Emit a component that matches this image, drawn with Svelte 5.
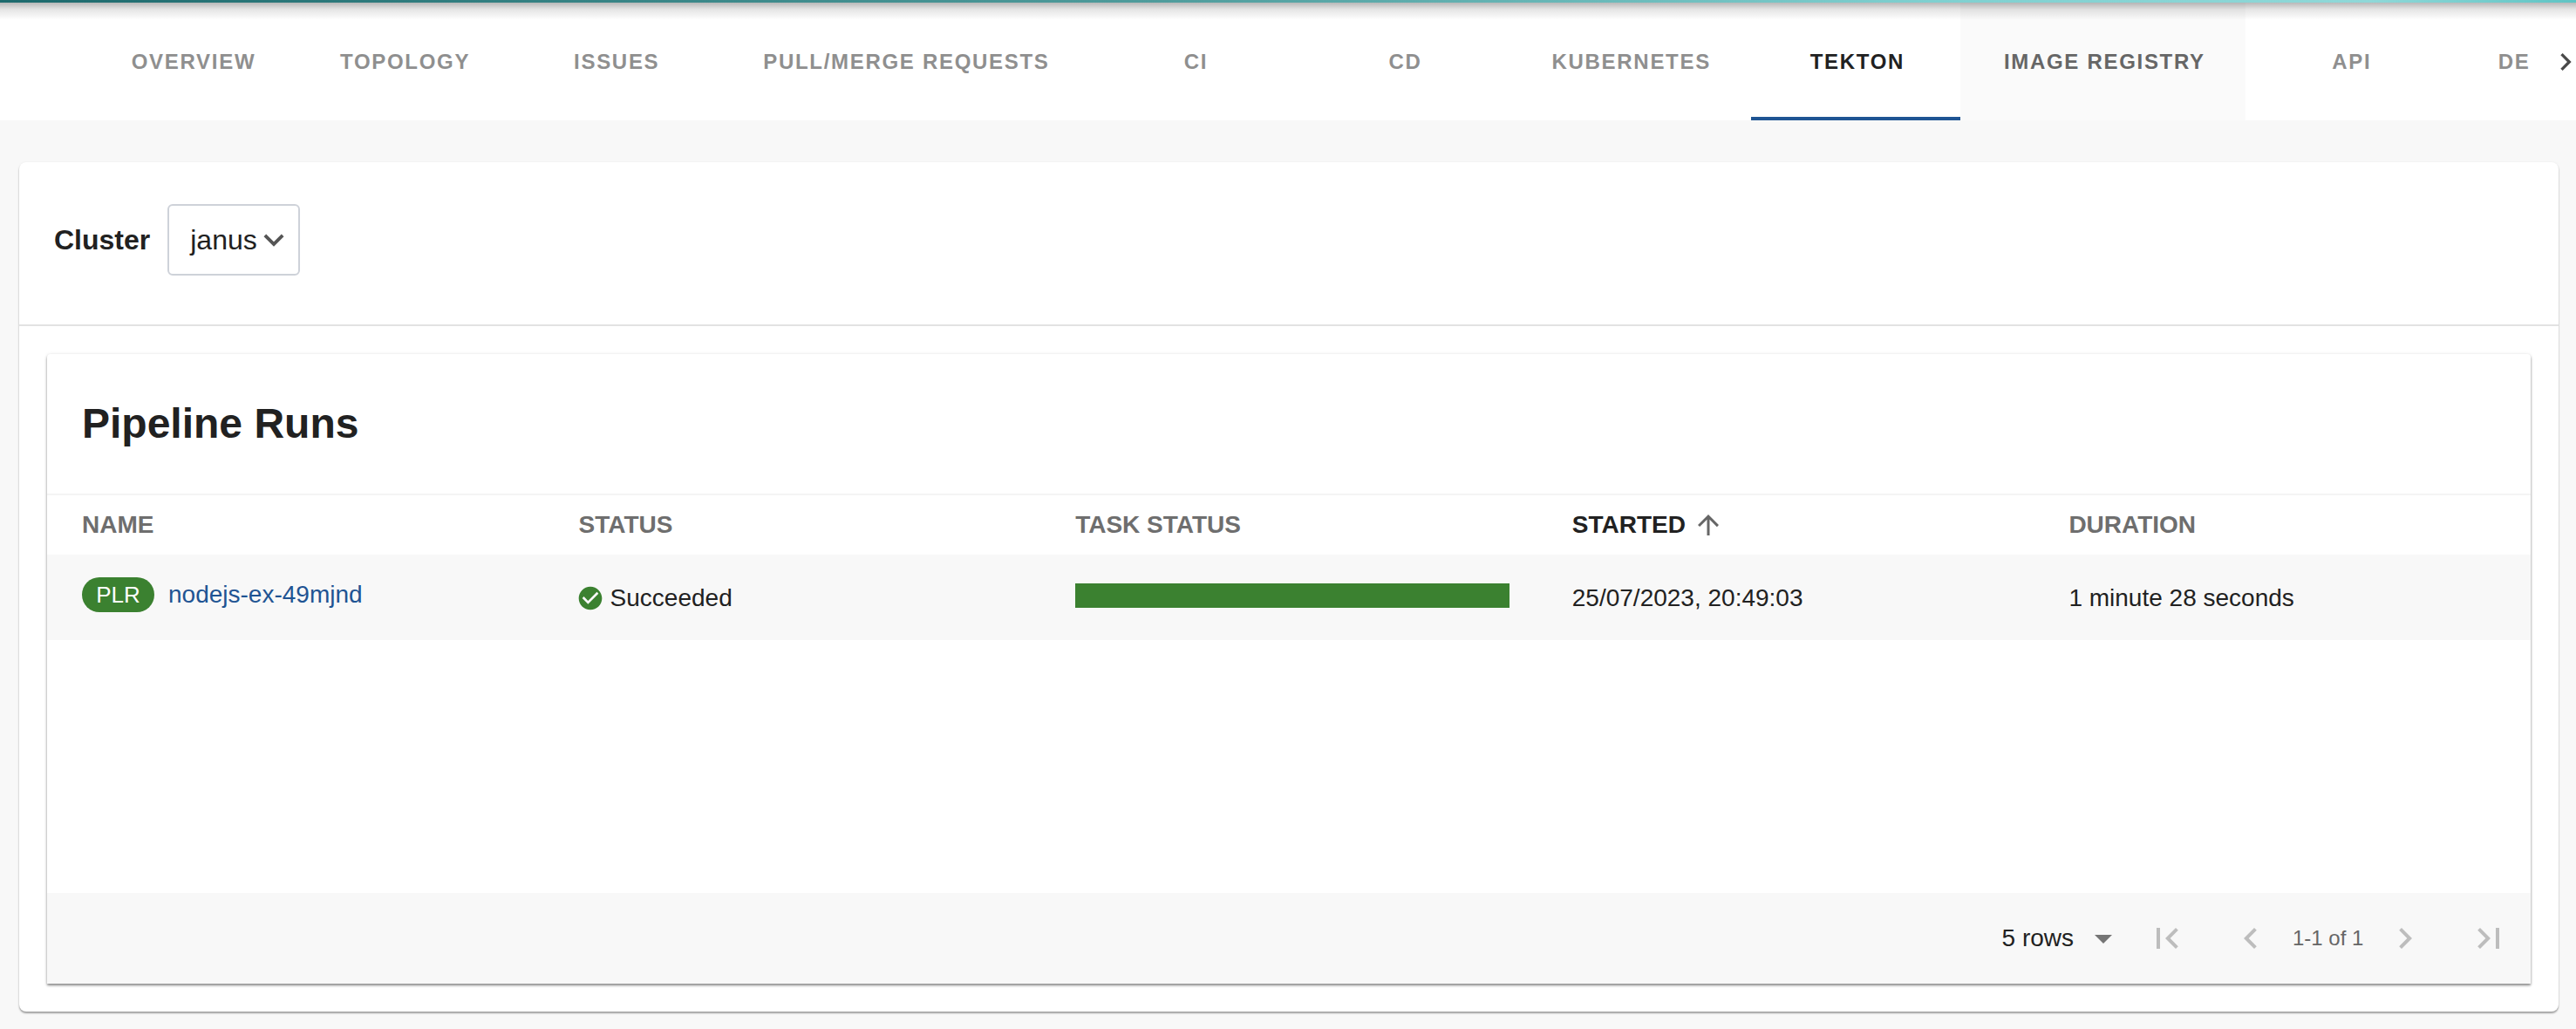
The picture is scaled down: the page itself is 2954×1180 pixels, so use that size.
<script lang="ts">
  const tabs = [
    'Overview',
    'Topology',
    'Issues',
    'Pull/Merge Requests',
    'CI',
    'CD',
    'Kubernetes',
    'Tekton',
    'Image Registry',
    'API',
    'Deployments'
  ];
  const activeTab = 'Tekton';
  const hoverTab = 'Image Registry';

  const columns = ['Name', 'Status', 'Task Status', 'Started', 'Duration'];
</script>

<div class="page">
  <div class="accent"></div>

  <nav class="tabbar">
    <div class="tabs">
      {#each tabs as tab}
        <div class="tab" class:active={tab === activeTab} class:hover={tab === hoverTab}>{tab}</div>
      {/each}
    </div>
    <div class="tab-scroll">
      <svg viewBox="0 0 24 24" width="40" height="40"><path d="M10 6L8.59 7.41 13.17 12l-4.58 4.59L10 18l6-6z" /></svg>
    </div>
    <div class="bar-shadow"></div>
  </nav>

  <main class="main">
    <section class="card">
      <div class="filter">
        <span class="filter-label">Cluster</span>
        <div class="select">
          <span>janus</span>
          <svg viewBox="0 0 24 24" width="46" height="46"><path d="M16.59 8.59L12 13.17 7.41 8.59 6 10l6 6 6-6z" /></svg>
        </div>
      </div>

      <div class="body">
        <section class="table-card">
          <h2 class="title">Pipeline Runs</h2>

          <div class="row head">
            {#each columns as col}
              <div class="th" class:sorted={col === 'Started'}>
                {col}
                {#if col === 'Started'}
                  <svg viewBox="0 0 24 24" width="36" height="36"><path d="M4 12l1.41 1.41L11 7.83V20h2V7.83l5.58 5.59L20 12l-8-8-8 8z" /></svg>
                {/if}
              </div>
            {/each}
          </div>

          <div class="row data">
            <div class="td name-cell">
              <span class="chip">PLR</span>
              <a class="link" href="#run">nodejs-ex-49mjnd</a>
            </div>
            <div class="td status-cell">
              <svg viewBox="0 0 24 24" width="32" height="32"><path d="M12 2C6.48 2 2 6.48 2 12s4.48 10 10 10 10-4.48 10-10S17.52 2 12 2zm-2 15l-5-5 1.41-1.41L10 14.17l7.59-7.59L19 8l-9 9z" /></svg>
              <span>Succeeded</span>
            </div>
            <div class="td"><div class="task-bar"></div></div>
            <div class="td">25/07/2023, 20:49:03</div>
            <div class="td">1 minute 28 seconds</div>
          </div>

          <div class="empty"></div>

          <footer class="pager">
            <div class="rows">
              <span>5 rows</span>
              <svg viewBox="0 0 24 24" width="48" height="48"><path d="M7 10l5 5 5-5z" /></svg>
            </div>
            <button class="page-btn" aria-label="First page" disabled>
              <svg viewBox="0 0 24 24" width="48" height="48"><path d="M18.41 16.59L13.82 12l4.59-4.59L17 6l-6 6 6 6zM6 6h2v12H6z" /></svg>
            </button>
            <button class="page-btn" aria-label="Previous page" disabled>
              <svg viewBox="0 0 24 24" width="48" height="48"><path d="M15.41 7.41L14 6l-6 6 6 6 1.41-1.41L10.83 12z" /></svg>
            </button>
            <span class="range">1-1 of 1</span>
            <button class="page-btn" aria-label="Next page" disabled>
              <svg viewBox="0 0 24 24" width="48" height="48"><path d="M10 6L8.59 7.41 13.17 12l-4.58 4.59L10 18l6-6z" /></svg>
            </button>
            <button class="page-btn" aria-label="Last page" disabled>
              <svg viewBox="0 0 24 24" width="48" height="48"><path d="M5.59 7.41L10.18 12l-4.59 4.59L7 18l6-6-6-6zM16 6h2v12h-2z" /></svg>
            </button>
          </footer>
        </section>
      </div>
    </section>
  </main>
</div>

<style>
  :global(body) {
    background: #f8f8f8;
    overflow: hidden;
  }

  .page {
    height: 1180px;
    font-family: 'Liberation Sans', Arial, sans-serif;
    color: #212121;
    font-size: 28px;
  }

  .accent {
    height: 3px;
    background: linear-gradient(90deg, #1d6a6d 0%, #4f9c9c 45%, #7fd0d0 75%, #8fd8d8 92%, #5fc4c4 100%);
  }

  /* Tabs */
  .tabbar {
    position: relative;
    display: flex;
    height: 135px;
    background: #fff;
    overflow: hidden;
  }

  .bar-shadow {
    position: absolute;
    top: 0;
    left: 0;
    right: 0;
    height: 20px;
    background: linear-gradient(180deg, rgba(0, 0, 0, 0.28) 0%, rgba(0, 0, 0, 0.1) 40%, rgba(0, 0, 0, 0) 100%);
    pointer-events: none;
  }

  .tabs {
    display: flex;
    flex: 1;
    min-width: 0;
    overflow: hidden;
    padding-left: 100px;
  }

  .tab {
    flex-shrink: 0;
    box-sizing: border-box;
    min-width: 240px;
    padding: 0 46px 0 50px;
    display: flex;
    align-items: center;
    justify-content: center;
    font-size: 24px;
    font-weight: 700;
    letter-spacing: 1.7px;
    text-transform: uppercase;
    white-space: nowrap;
    color: #8f8f8f;
  }

  .tab.active {
    color: #212121;
    box-shadow: inset 0 -4px 0 #1f5493;
  }

  .tab.hover {
    color: #666;
    background: #fafafa;
  }

  .tab-scroll {
    flex: 0 0 54px;
    display: flex;
    align-items: center;
    overflow: hidden;
  }

  .tab-scroll svg {
    flex-shrink: 0;
    margin-left: 22px;
    fill: #4a4a4a;
  }

  /* Outer card */
  .main {
    padding: 48px 20px 0 22px;
  }

  .card {
    height: 974px;
    box-sizing: border-box;
    display: flex;
    flex-direction: column;
    background: #fff;
    border-radius: 8px;
    box-shadow: 0 2px 2px rgba(0, 0, 0, 0.35), 0 0 3px rgba(0, 0, 0, 0.05);
  }

  .filter {
    height: 188px;
    flex-shrink: 0;
    box-sizing: border-box;
    display: flex;
    align-items: center;
    gap: 20px;
    padding: 0 0 8px 40px;
    border-bottom: 2px solid #e2e2e2;
  }

  .filter-label {
    font-size: 32px;
    font-weight: 700;
  }

  .select {
    box-sizing: border-box;
    width: 152px;
    height: 82px;
    display: flex;
    align-items: center;
    padding-left: 24px;
    font-size: 32px;
    border: 2px solid #ced2d9;
    border-radius: 6px;
  }

  .select svg {
    flex-shrink: 0;
    margin-left: -4px;
    fill: #555;
  }

  .body {
    flex: 1;
    display: flex;
    padding: 32px;
    min-height: 0;
  }

  /* Table card */
  .table-card {
    flex: 1;
    min-width: 0;
    display: flex;
    flex-direction: column;
    background: #fff;
    border-radius: 4px 4px 0 0;
    box-shadow: 0 2px 3px rgba(0, 0, 0, 0.45), 0 0 4px rgba(0, 0, 0, 0.08);
  }

  .title {
    height: 162px;
    flex-shrink: 0;
    box-sizing: border-box;
    margin: 0;
    padding: 0 40px;
    display: flex;
    align-items: center;
    font-size: 48px;
    font-weight: 700;
    line-height: 1;
    border-bottom: 2px solid #f4f4f4;
  }

  .row {
    display: grid;
    grid-template-columns: repeat(5, 1fr);
    flex-shrink: 0;
  }

  .head {
    height: 68px;
  }

  .data {
    height: 98px;
    background: #f8f8f8;
  }

  .th {
    display: flex;
    align-items: center;
    gap: 8px;
    padding-left: 40px;
    font-size: 28px;
    font-weight: 700;
    text-transform: uppercase;
    color: #6e6e6e;
  }

  .th.sorted {
    color: #212121;
  }

  .th svg {
    fill: #666;
  }

  .td {
    display: flex;
    align-items: center;
    padding-left: 40px;
    padding-top: 2px;
    min-width: 0;
  }

  .name-cell {
    gap: 16px;
    padding-bottom: 8px;
  }

  .chip {
    width: 83px;
    height: 40px;
    display: flex;
    align-items: center;
    justify-content: center;
    flex-shrink: 0;
    border-radius: 20px;
    background: #3b8130;
    color: #fff;
    font-size: 26px;
  }

  .link {
    color: #1f5493;
    text-decoration: none;
  }

  .status-cell {
    gap: 7px;
    padding-left: 37px;
  }

  .status-cell svg {
    fill: #3b8130;
    flex-shrink: 0;
  }

  .task-bar {
    width: 498px;
    height: 28px;
    margin-top: -6px;
    background: #3b8130;
  }

  .empty {
    flex: 1;
  }

  /* Pagination */
  .pager {
    height: 104px;
    flex-shrink: 0;
    display: flex;
    align-items: center;
    justify-content: flex-end;
    background: #f8f8f8;
  }

  .rows {
    display: flex;
    align-items: center;
    gap: 10px;
    margin-right: 1px;
  }

  .rows svg {
    fill: #757575;
  }

  .page-btn {
    width: 96px;
    height: 96px;
    padding: 0;
    display: flex;
    align-items: center;
    justify-content: center;
    border: 0;
    background: transparent;
  }

  .page-btn svg {
    fill: #bdbdbd;
  }

  .range {
    width: 81px;
    font-size: 24px;
    color: #666;
    white-space: nowrap;
  }
</style>
